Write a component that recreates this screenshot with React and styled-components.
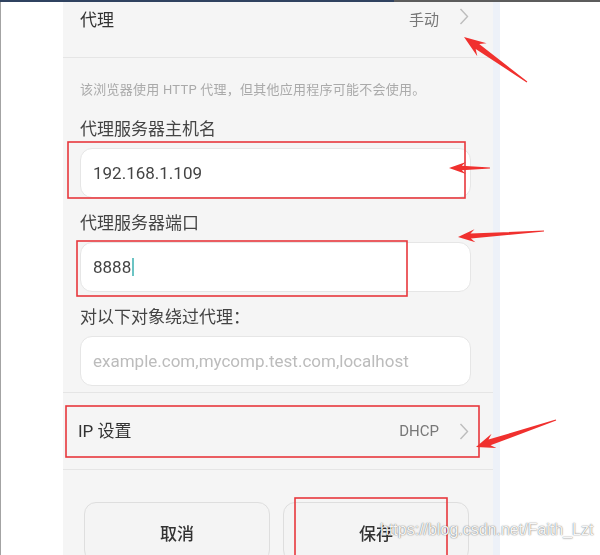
import styled, { createGlobalStyle } from 'styled-components'

const GlobalStyle = createGlobalStyle`
  html, body {
    margin: 0;
    padding: 0;
    background: #fff;
  }
  body {
    font-family: Roboto, "Noto Sans CJK SC", sans-serif;
  }
`

const Page = styled.div`
  position: relative;
  width: 600px;
  height: 555px;
  overflow: hidden;
  display: flex;
  flex-direction: column;
`

const TopStrip = styled.div`
  display: flex;
  height: 2px;
  flex-shrink: 0;
`

const StripPart = styled.div`
  background: ${(p) => p.$color};
  width: ${(p) => p.$width || 'auto'};
  flex: ${(p) => (p.$width ? 'none' : 1)};
`

const Body = styled.div`
  flex: 1;
  display: flex;
  border-left: 1px solid #a3a3a3;
  min-height: 0;
`

const Panel = styled.div`
  margin-left: 62px;
  width: 430px;
  background: #f5f5f5;
  border-right: 7px solid #edf1f8;
  overflow: hidden;
  display: flex;
  flex-direction: column;
  filter: blur(0.3px);

  > * {
    flex-shrink: 0;
  }
`

const HeaderRow = styled.div`
  height: 55px;
  display: flex;
  align-items: flex-start;
  padding: 6px 24px 0 17px;
  box-sizing: border-box;
`

const NavRow = styled.div`
  height: 76px;
  display: flex;
  align-items: center;
  padding: 0 24px 0 15px;
  box-sizing: border-box;
`

const RowTitle = styled.div`
  flex: 1;
  font-size: 17px;
  line-height: 24px;
  color: #333;
`

const RowValue = styled.span`
  font-size: 15px;
  line-height: 24px;
  color: #777;
  margin-right: 20px;
`

const Divider = styled.div`
  height: 1px;
  background: #e5e5e5;
`

const Form = styled.div`
  display: flex;
  flex-direction: column;
  gap: 13px;
  padding: 0 22px 6px 17px;
`

const Note = styled.p`
  margin: 22px 0 4px;
  font-size: 13px;
  letter-spacing: 0.25px;
  line-height: 20px;
  color: #aaa;
`

const Field = styled.div`
  display: flex;
  flex-direction: column;
  gap: 7px;
`

const Label = styled.div`
  font-size: 17px;
  line-height: 24px;
  color: #444;
`

const InputBox = styled.div`
  height: 50px;
  box-sizing: border-box;
  background: #fff;
  border: 1px solid #e6e6e6;
  border-radius: 12px;
  display: flex;
  align-items: center;
  padding-left: 12px;
  font-size: 17px;
  color: ${(p) => (p.$placeholder ? '#bcbcbc' : '#444')};
`

const Caret = styled.span`
  display: inline-block;
  width: 2px;
  height: 18px;
  background: #6cc4c4;
  margin-left: 1px;
`

const ButtonRow = styled.div`
  display: flex;
  gap: 13px;
  padding: 32px 24px 0 21px;
`

const Button = styled.div`
  flex: 1;
  height: 60px;
  box-sizing: border-box;
  border: 1px solid #dedede;
  border-radius: 12px;
  background: #f4f4f4;
  display: flex;
  align-items: center;
  justify-content: center;
  font-size: 17px;
  font-weight: 500;
  color: #333;
`

const Overlay = styled.svg`
  position: absolute;
  left: 0;
  top: 0;
  pointer-events: none;
`

const Watermark = styled.div`
  position: absolute;
  left: 380px;
  top: 520px;
  font-family: "Liberation Sans", Arial, sans-serif;
  font-size: 16px;
  line-height: 20px;
  color: rgba(255, 255, 255, 0.95);
  text-shadow: 0 0 1px rgba(0, 0, 0, 0.55), 0 0 2px rgba(0, 0, 0, 0.25);
  white-space: nowrap;
`

const Chevron = () => (
  <svg width="10" height="17" viewBox="0 0 10 17">
    <polyline points="1.5,1 8.5,8.5 1.5,16" fill="none" stroke="#bdbdbd" strokeWidth="1.4" />
  </svg>
)

// tapered annotation arrow, tail -> tip
const arrowPoints = ({ tail, tip, head = 20, half = 8, shaft = 3, end = 0.6 }) => {
  const dx = tip[0] - tail[0]
  const dy = tip[1] - tail[1]
  const len = Math.hypot(dx, dy)
  const ux = dx / len
  const uy = dy / len
  const nx = -uy
  const ny = ux
  const base = [tip[0] - ux * head, tip[1] - uy * head]
  const notch = [tip[0] - ux * head * 0.75, tip[1] - uy * head * 0.75]
  const pts = [
    tip,
    [base[0] + nx * half, base[1] + ny * half],
    [notch[0] + nx * shaft, notch[1] + ny * shaft],
    [tail[0] + nx * end, tail[1] + ny * end],
    [tail[0] - nx * end, tail[1] - ny * end],
    [notch[0] - nx * shaft, notch[1] - ny * shaft],
    [base[0] - nx * half, base[1] - ny * half]
  ]
  return pts.map((p) => p.map((v) => v.toFixed(1)).join(',')).join(' ')
}

const boxes = [
  { x: 68, y: 142, w: 397, h: 56 },
  { x: 77, y: 241, w: 330, h: 55 },
  { x: 66, y: 406, w: 413, h: 51 },
  { x: 295, y: 498, w: 152, h: 70 }
]

const arrows = [
  { tail: [527, 82], tip: [464, 37], head: 22, half: 8, shaft: 3 },
  { tail: [490, 168], tip: [449, 168], head: 17, half: 6, shaft: 2.2 },
  { tail: [544, 231], tip: [458, 237], head: 17, half: 6.5, shaft: 2.5 },
  { tail: [556, 420], tip: [476, 447], head: 19, half: 7.5, shaft: 3 }
]

const Annotations = () => (
  <Overlay width="600" height="555">
    {boxes.map((b, i) => (
      <rect key={i} x={b.x} y={b.y} width={b.w} height={b.h} fill="none" stroke="#e8383d" strokeWidth="1.6" />
    ))}
    {arrows.map((a, i) => (
      <polygon key={i} points={arrowPoints(a)} fill="#f0302e" />
    ))}
  </Overlay>
)

const fields = [
  { label: '代理服务器主机名', value: '192.168.1.109' },
  { label: '代理服务器端口', value: '8888', caret: true },
  { label: '对以下对象绕过代理：', value: 'example.com,mycomp.test.com,localhost', placeholder: true }
]

const App = () => {
  return (
    <Page>
      <GlobalStyle />
      <TopStrip>
        <StripPart $color="#2f4260" $width="394px" />
        <StripPart $color="#5c5c5c" />
      </TopStrip>
      <Body>
        <Panel>
          <HeaderRow>
            <RowTitle>代理</RowTitle>
            <RowValue>手动</RowValue>
            <Chevron />
          </HeaderRow>
          <Divider />

          <Form>
            <Note>该浏览器使用 HTTP 代理，但其他应用程序可能不会使用。</Note>
            {fields.map((f) => (
              <Field key={f.label}>
                <Label>{f.label}</Label>
                <InputBox $placeholder={f.placeholder}>
                  {f.value}
                  {f.caret && <Caret />}
                </InputBox>
              </Field>
            ))}
          </Form>
          <Divider />

          <NavRow>
            <RowTitle>IP 设置</RowTitle>
            <RowValue>DHCP</RowValue>
            <Chevron />
          </NavRow>
          <Divider />

          <ButtonRow>
            <Button>取消</Button>
            <Button>保存</Button>
          </ButtonRow>
        </Panel>
      </Body>
      <Annotations />
      <Watermark>https://blog.csdn.net/Faith_Lzt</Watermark>
    </Page>
  )
}

export default App
